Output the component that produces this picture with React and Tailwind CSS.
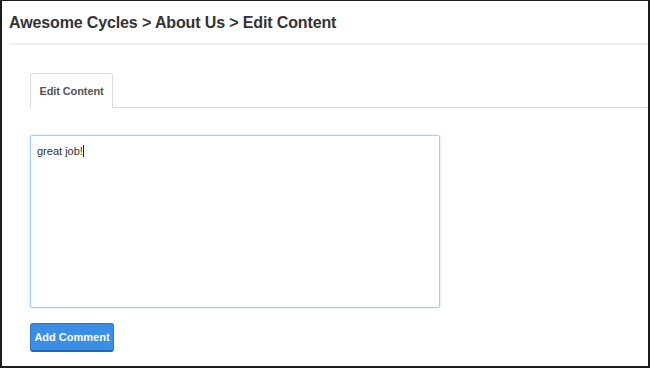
export default function App() {
  return (
    <div className="w-[650px] h-[368px] bg-white border-t border-l-2 border-r-2 border-b-2 border-[#1c1c1c] overflow-hidden" style={{ fontFamily: '"Liberation Sans", Arial, sans-serif' }}>
      <div className="pl-[7px]">
        <div className="h-[42px] flex items-center pt-[1px]">
          <h1 className="text-[16px] font-bold text-[#333] leading-none tracking-[-0.13px]">Awesome Cycles &gt; About Us &gt; Edit Content</h1>
        </div>
        <div className="h-[2px] bg-[#eeeeee]" />
      </div>
      <div className="pl-[28px] pt-[28px]">
        <div className="flex items-end">
          <div className="w-[83px] h-[35px] border border-b-0 border-[#dddddd] rounded-t-[3px] flex items-center justify-center bg-white">
            <span className="text-[11px] font-bold text-[#555] tracking-[-0.1px]">Edit Content</span>
          </div>
          <div className="flex-1 h-px bg-[#dddddd]" />
        </div>
        <div className="mt-[27px] w-[410px] h-[173px] border-[1.5px] border-[#9fd0fb] rounded-[2px] shadow-[0_0_2px_rgba(102,175,233,0.5)] px-[6px] pt-[2px]">
          <span className="text-[11px] text-[#333]">great job!</span>
          <span className="inline-block w-px h-[12px] bg-[#222] align-[-2px]" />
        </div>
        <button className="mt-[15px] w-[84px] h-[29px] bg-[#3a8ee6] border border-[#2a76c6] border-b-2 border-b-[#2566ad] rounded-[3px] text-white text-[11px] font-bold flex items-center justify-center">
          Add Comment
        </button>
      </div>
    </div>
  );
}
